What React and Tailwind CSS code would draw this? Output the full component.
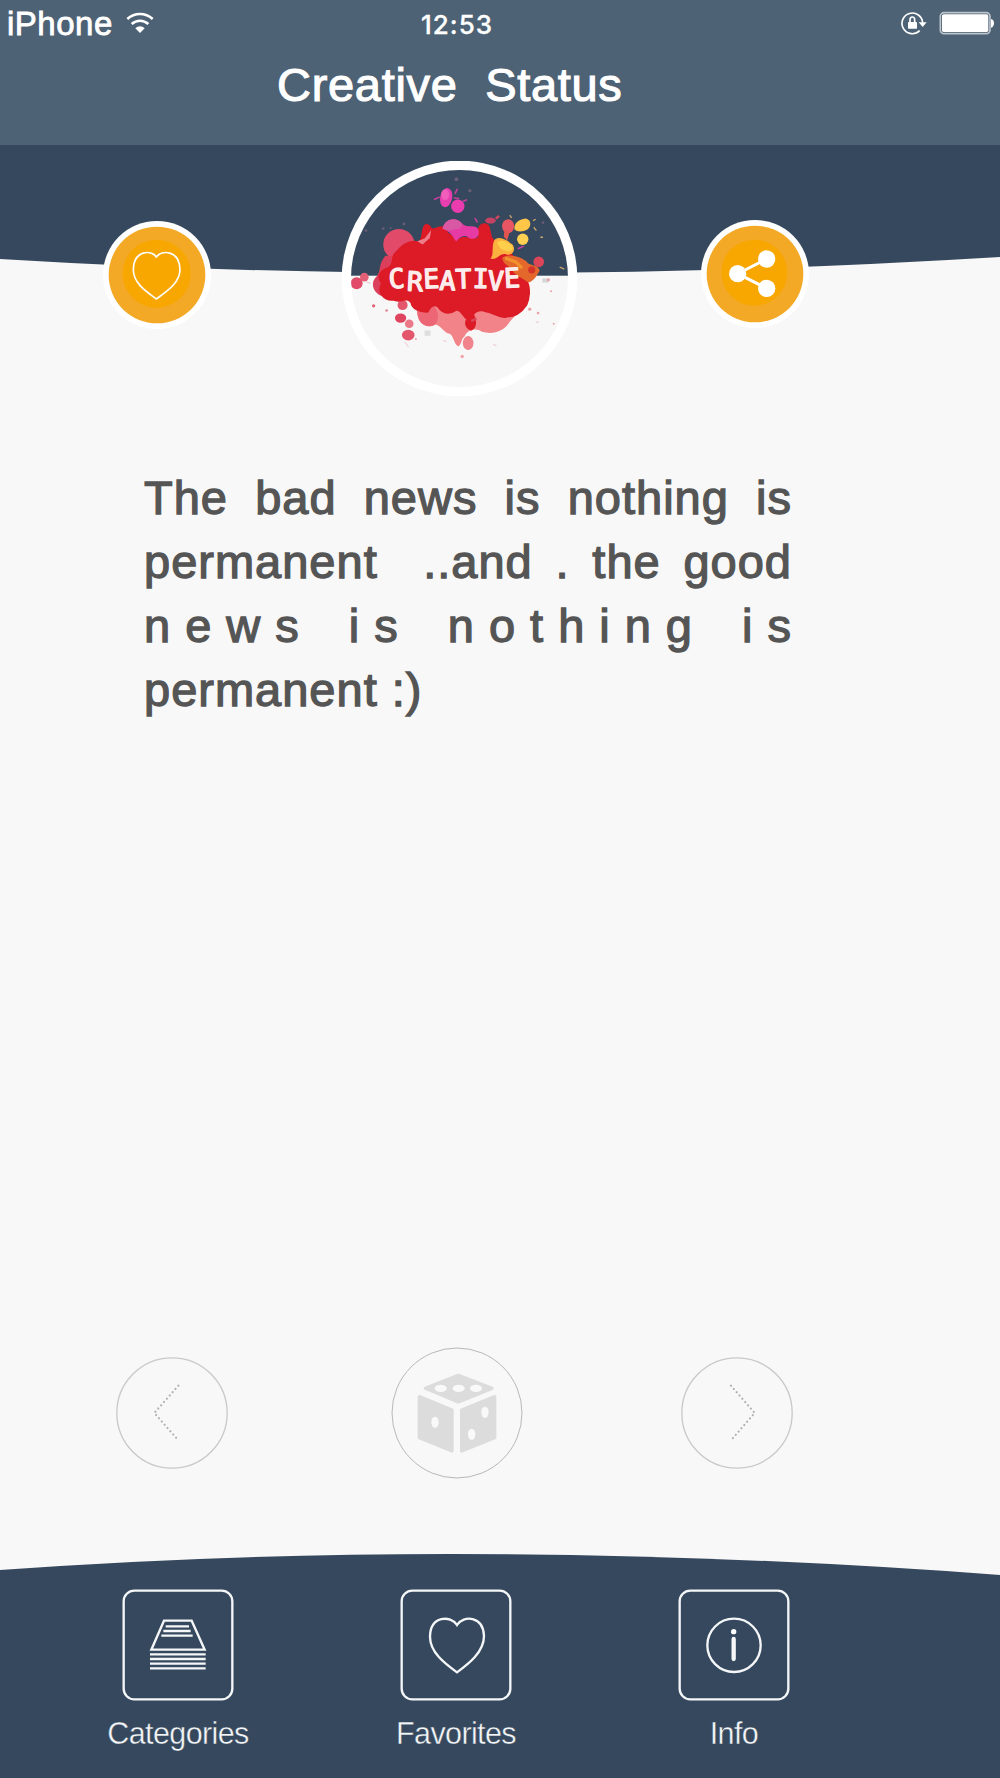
function StatusBar() {
  return (
    <div className="flex h-[46px] items-center pl-[7px] pr-[5px]">
      <div className="flex w-[414px] items-center">
        <span className="pt-[1px] text-[33px] leading-[46px] tracking-[0.5px] [-webkit-text-stroke:0.8px_white]">iPhone</span>
        <svg className="ml-[13px] h-[24px] w-[28px]" viewBox="0 0 84 72" fill="none" stroke="white" strokeWidth="8">
          <path d="M4 24C26 4 58 4 80 24" />
          <path d="M17 39C32 26 52 26 67 39" />
          <path d="M28 52C36 44 48 44 56 52L42 66Z" fill="white" stroke="none" />
        </svg>
      </div>
      <span className="pt-[3px] font-['Inter',sans-serif] text-[26px] font-medium leading-[44px] tracking-[1px] [-webkit-text-stroke:0.3px_white]">12:53</span>
      <div className="flex grow items-center justify-end">
        <svg className="h-[24px] w-[28px]" viewBox="0 0 84 72" fill="none" stroke="white">
          <path d="M71 36A31 31 0 1 0 62 59" strokeWidth="5" />
          <path d="M59 34H83L71 48Z" fill="white" stroke="none" />
          <path d="M33 34V26A7 8 0 0 1 47 26V34" strokeWidth="5" />
          <rect x="27" y="33" width="27" height="20" rx="2" fill="white" stroke="none" />
        </svg>
        <svg className="ml-[12px] h-[24px] w-[56px]" viewBox="0 0 168 72">
          <rect x="4" y="5" width="149" height="63" rx="11" fill="none" stroke="#bcc4cc" strokeWidth="5" />
          <rect x="9" y="10" width="139" height="53" rx="5" fill="white" />
          <path d="M156 24C168 26 168 48 156 50Z" fill="white" />
        </svg>
      </div>
    </div>
  );
}

function Header() {
  return (
    <header className="h-[145px] bg-[#4e6275] text-white">
      <StatusBar />
      <h1 className="pt-[1px] pl-[277px] text-[47px] leading-[76px] tracking-[0.7px] whitespace-pre [-webkit-text-stroke:1.1px_white]">
        {'Creative  Status'}
      </h1>
    </header>
  );
}

function HeartButton() {
  return (
    <button className="mt-[60px] h-[108px] w-[108px] shrink-0">
      <svg viewBox="0 0 324 324" className="h-full w-full">
        <circle cx="162" cy="162" r="162" fill="white" />
        <circle cx="162" cy="162" r="145" fill="#f3a926" />
        <circle cx="161" cy="158" r="102" fill="#f8a600" />
        <path
          d="M160 108C148 86 90 86 91 148C92 188 132 213 160 234C188 213 230 188 231 146C230 86 174 86 160 108Z"
          fill="none"
          stroke="white"
          strokeWidth="5"
          strokeLinejoin="round"
        />
      </svg>
    </button>
  );
}

function ShareButton() {
  return (
    <button className="mt-[59px] ml-[123px] h-[108px] w-[108px] shrink-0">
      <svg viewBox="0 0 324 324" className="h-full w-full">
        <circle cx="162" cy="162" r="162" fill="white" />
        <circle cx="162" cy="162" r="145" fill="#f3a926" />
        <circle cx="160" cy="158" r="99" fill="#f8a600" />
        <path d="M197 117L110 161L197 205" fill="none" stroke="white" strokeWidth="9" />
        <circle cx="197" cy="117" r="26" fill="white" />
        <circle cx="110" cy="161" r="26" fill="white" />
        <circle cx="197" cy="205" r="26" fill="white" />
      </svg>
    </button>
  );
}

function Logo() {
  return (
    <svg viewBox="34 33 710 712" className="ml-[130px] h-[237px] w-[237px] shrink-0">
      <defs>
        <clipPath id="disc">
          <circle cx="389" cy="386" r="326" />
        </clipPath>
      </defs>
      <circle cx="389" cy="386" r="354" fill="white" />
      <g clipPath="url(#disc)">
        <rect x="34" y="30" width="710" height="348" fill="#35485d" />
        <rect x="34" y="378" width="710" height="370" fill="#f7f7f7" />

        {/* pale drips */}
        <path
          d="M262 480C262 520 290 540 318 524C340 534 346 552 360 552C372 560 372 584 386 590C396 582 394 566 404 560C412 540 440 532 456 546C490 556 524 544 540 516L580 470L300 450Z"
          fill="#f28489"
        />
        <path d="M262 480C260 524 292 540 318 522C332 500 322 470 300 460Z" fill="#ec6675" />
        <ellipse cx="415" cy="580" rx="16" ry="21" fill="#f0838b" />
        <circle cx="397" cy="620" r="5" fill="#f4a2a6" />

        {/* rose blobs on the left */}
        <circle cx="207" cy="284" r="47" fill="#e14b69" />
        <path d="M166 318C142 350 156 360 140 380C118 400 132 430 154 438L220 440L230 320Z" fill="#dc3f5b" />
        <circle cx="80" cy="400" r="18" fill="#e14b69" />
        <circle cx="103" cy="382" r="13" fill="#e36077" />
        <circle cx="131" cy="468" r="5" fill="#e36077" />
        <circle cx="170" cy="482" r="4" fill="#e88494" />
        <circle cx="218" cy="466" r="15" fill="#e4566b" />
        <ellipse cx="212" cy="505" rx="17" ry="14" fill="#e0455f" />
        <circle cx="238" cy="522" r="13" fill="#ea7886" />
        <ellipse cx="235" cy="556" rx="19" ry="16" fill="#e4566b" />
        <path d="M108 396L122 400M224 576L236 592M340 572L350 576M490 584L500 588M618 516L628 518" stroke="#efc4c8" strokeWidth="3" />
        <rect x="284" y="542" width="18" height="16" fill="#dedede" />
        <rect x="638" y="386" width="18" height="12" fill="#d5d5d8" />

        {/* main splash */}
        <path
          d="M196 310C222 278 246 270 268 278C284 260 272 230 290 224C306 226 296 244 318 236C340 226 350 234 352 250C372 260 380 276 398 264C420 260 436 276 448 262C438 232 456 216 474 226C486 244 476 258 490 270C520 286 548 312 562 340C586 352 598 374 590 392C604 414 598 450 590 466C574 490 552 502 534 500C514 510 492 488 470 486C452 478 438 484 430 494C440 514 438 534 424 540C410 536 404 520 412 508C396 496 398 482 380 480C360 494 342 490 330 478C318 456 300 470 294 486C272 488 246 478 244 458C228 438 214 462 190 450C162 452 140 428 156 400C138 380 152 362 176 354C196 340 182 322 196 310Z"
          fill="#dc1b26"
          stroke="#dc1b26"
          strokeWidth="5"
        />
        <ellipse cx="482" cy="212" rx="16" ry="9" fill="#c64263" />
        <path d="M498 206L508 198M424 514L440 506" stroke="#d9465c" strokeWidth="7" />
        <path d="M262 274L284 266L304 240L300 264L278 284Z" fill="#ee7d8c" />

        {/* magenta */}
        <path d="M338 236C346 206 378 200 396 220C412 238 438 220 446 240C452 262 432 272 418 264C402 250 388 264 380 274C370 270 372 250 338 236Z" fill="#e63aa5" />
        <path d="M338 236C346 206 378 200 396 220C400 234 384 240 374 238C362 244 352 244 338 236Z" fill="#d858a4" />
        <ellipse cx="349" cy="143" rx="18" ry="29" transform="rotate(12 349 143)" fill="#e83fb0" />
        <ellipse cx="346" cy="134" rx="12" ry="16" fill="#f05dbb" />
        <circle cx="384" cy="169" r="20" fill="#ea3cae" />
        <path d="M314 148L328 142M376 130L382 118M374 144L386 146M400 154L410 150M436 206L442 216M566 296L580 290" stroke="#c23f9b" strokeWidth="5" strokeLinecap="round" />

        {/* yellow and orange */}
        <path d="M494 270C510 256 534 272 548 284C560 300 548 318 530 314C512 306 500 334 482 326C494 312 484 290 494 270Z" fill="#fbb13e" />
        <path d="M502 278C516 266 530 278 546 286C556 300 540 308 526 302C514 300 508 292 502 278Z" fill="#ffcf4b" />
        <path d="M518 322C540 312 566 318 590 334C598 350 622 340 630 362C618 384 610 394 596 398C580 384 554 378 546 358C534 346 516 340 518 322Z" fill="#e4672c" />
        <path d="M530 326L558 336L574 352" fill="none" stroke="#f2922f" strokeWidth="10" strokeLinecap="round" />
        <circle cx="606" cy="360" r="11" fill="#d2342a" />
        <ellipse cx="535" cy="229" rx="18" ry="21" fill="#e85563" />
        <path d="M524 240L540 246L532 272L522 260Z" fill="#e0534e" />
        <path d="M554 238C552 222 566 208 588 206C604 210 606 228 594 238C580 246 564 248 554 238Z" fill="#ffc648" />
        <circle cx="579" cy="268" r="17" fill="#ffd052" />
        <circle cx="627" cy="336" r="16" fill="#dd4658" />
        <path d="M612 232L620 242M632 262L640 262M690 352L704 358M610 212L618 208M540 196L546 204" stroke="#c9a46b" strokeWidth="4" />

        {/* dust */}
        <g fill="#6a5d76">
          <circle cx="380" cy="88" r="6" />
          <circle cx="420" cy="122" r="5" />
          <circle cx="108" cy="242" r="4" />
          <circle cx="160" cy="236" r="4" />
          <circle cx="182" cy="234" r="3" />
          <circle cx="222" cy="222" r="4" />
          <circle cx="640" cy="218" r="4" />
        </g>
        <g fill="#e8a3a9">
          <circle cx="600" cy="478" r="5" />
          <circle cx="625" cy="490" r="4" />
          <circle cx="664" cy="424" r="3" />
          <circle cx="672" cy="522" r="3" />
          <circle cx="656" cy="390" r="5" />
          <circle cx="258" cy="568" r="3" />
        </g>

        <text
          x="178 230 282 328 378 428 472 524"
          y="416 422 416 420 416 414 420 414"
          rotate="-4 3 -3 2 -2 1 3 -3"
          fontSize="80"
          fill="#fdecec"
          stroke="#fdecec"
          strokeWidth="4"
          strokeLinejoin="round"
          className="font-['DejaVu_Sans_Mono','Liberation_Mono',monospace]"
        >
          CREATIVE
        </text>
      </g>
    </svg>
  );
}

function Quote() {
  return (
    <p className="ml-[144px] w-[648px] pt-[5px] text-[47px] leading-[64px] tracking-[1px] text-[#555] [-webkit-text-stroke:1.3px_#555]">
      <span className="block [text-align-last:justify]">The bad news is nothing is</span>
      <span className="block [text-align-last:justify]">permanent&nbsp; ..and . the good</span>
      <span className="-mr-[14px] block tracking-[15px] [text-align-last:justify]">news is nothing is</span>
      <span className="block">permanent :)</span>
    </p>
  );
}

function ArrowButton({ points, className }) {
  return (
    <button className={className}>
      <svg viewBox="0 0 336 336" className="h-[112px] w-[112px]" fill="none" stroke="#c9c9c9">
        <circle cx="168" cy="168" r="165.500" strokeWidth="4" />
        <polyline points={points} stroke="#b0b0b0" strokeWidth="6.500" strokeLinecap="round" strokeDasharray="0.1 12.900" />
      </svg>
    </button>
  );
}

function DiceButton() {
  return (
    <button className="ml-[163px]">
      <svg viewBox="0 0 396 396" className="h-[132px] w-[132px]">
        <circle cx="198" cy="198" r="195" fill="none" stroke="#b8b8b8" strokeWidth="3" />
        <g fill="#dcdcdc" stroke="#dcdcdc" strokeWidth="10" strokeLinejoin="round">
          <path d="M202 85L303 124L202 165L103 124Z" />
          <path d="M85 149L183 189V312L85 272Z" />
          <path d="M212 189L311 149V272L212 312Z" />
        </g>
        <g fill="#f9f9f9">
          <ellipse cx="149" cy="124" rx="18" ry="11" />
          <ellipse cx="203" cy="124" rx="18" ry="11" />
          <ellipse cx="255" cy="124" rx="18" ry="11" />
          <ellipse cx="132" cy="226" rx="11" ry="17" />
          <ellipse cx="282" cy="196" rx="11" ry="17" />
          <ellipse cx="242" cy="262" rx="11" ry="17" />
        </g>
      </svg>
    </button>
  );
}

const tabs = [
  {
    label: 'Categories',
    icon: (
      <>
        <path d="M126 95H209L248 182H88Z" />
        <path d="M131 112H201M124 126H206M118 140H212M84 196H251M84 210H251M84 224H251M84 238H251" />
      </>
    ),
  },
  {
    label: 'Favorites',
    icon: (
      <path d="M171 108C152 78 91 80 90 143C90 190 134 223 171 250C204 226 252 190 252 141C250 80 190 78 171 108Z" />
    ),
  },
  {
    label: 'Info',
    icon: (
      <>
        <circle cx="168" cy="169" r="80" />
        <circle cx="167" cy="128" r="8" fill="white" stroke="none" />
        <path d="M167 150V210" strokeWidth="13" strokeLinecap="round" />
      </>
    ),
  },
];

function TabBar() {
  return (
    <footer className="relative h-[228px]">
      <svg className="absolute inset-0 h-full w-full" viewBox="0 0 1000 228">
        <path d="M0 20Q220 4 450 4Q720 4 1000 25V228H0Z" fill="#35485d" />
      </svg>
      <nav className="relative flex pt-[39px] pl-[78px]">
        {tabs.map((tab) => (
          <button key={tab.label} className="mr-[78px] flex w-[200px] flex-col items-center text-[#f4f6f8]">
            <svg viewBox="0 0 336 336" className="h-[112px] w-[112px]" fill="none" stroke="#f4f6f8" strokeWidth="7">
              <rect x="5" y="5" width="326" height="326" rx="32" />
              {tab.icon}
            </svg>
            <span className="mt-[14px] text-[30.500px] leading-[36px] tracking-[-0.6px] [-webkit-text-stroke:0.4px_#35485d]">
              {tab.label}
            </span>
          </button>
        ))}
      </nav>
    </footer>
  );
}

export default function App() {
  return (
    <div className="flex h-[1778px] w-[1000px] flex-col overflow-hidden bg-[#f8f8f8] font-['Liberation_Sans',Arial,sans-serif]">
      <Header />
      <section className="relative h-[316px]">
        <svg className="absolute top-0 left-0 h-[130px] w-[1000px]" viewBox="0 0 1000 130">
          <path d="M0 0H1000V112Q720 129 470 128Q230 128 0 114Z" fill="#35485d" />
        </svg>
        <div className="relative flex items-start pt-[16px] pl-[103px]">
          <HeartButton />
          <Logo />
          <ShareButton />
        </div>
      </section>
      <main className="flex grow flex-col justify-between">
        <Quote />
        <div className="mb-[71px] flex items-center pl-[116px]">
          <ArrowButton points="187,86 115,168 187,250" className="h-[112px]" />
          <DiceButton />
          <ArrowButton points="150,86 221,168 150,250" className="ml-[158px] h-[112px]" />
        </div>
      </main>
      <TabBar />
    </div>
  );
}
